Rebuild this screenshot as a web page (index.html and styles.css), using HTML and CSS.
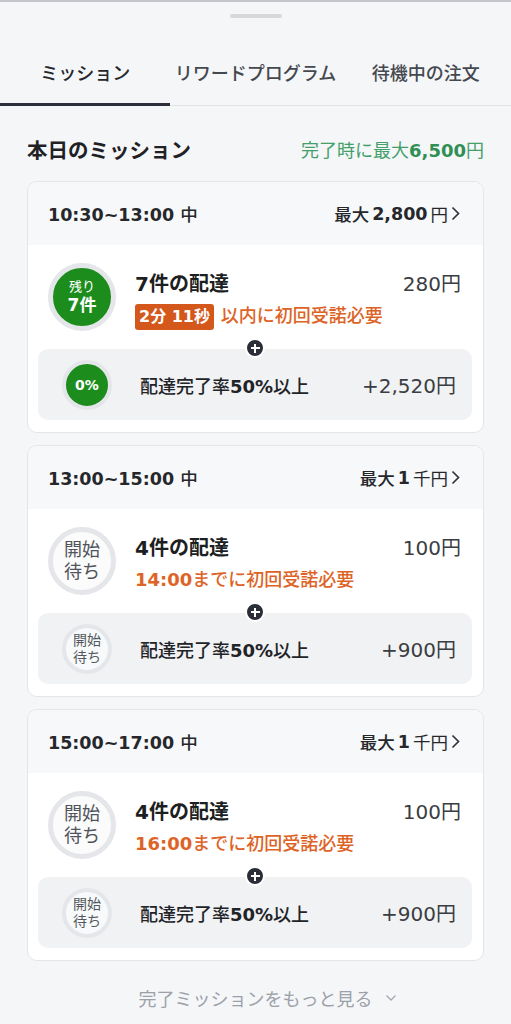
FILE: index.html
```html
<!DOCTYPE html>
<html lang="ja">
<head>
  <meta charset="UTF-8" />
  <meta name="viewport" content="width=device-width, initial-scale=1.0"/>
  <title>ミッション</title>
  <link rel="stylesheet" href="styles.css">
</head>
<body>

<div class="handle"></div>

<div class="tabs">
  <div class="tab actif">ミッション</div>
  <div class="tab">リワードプログラム</div>
  <div class="tab">待機中の注文</div>
</div>

<div class="titre">
  <h1>本日のミッション</h1>
  <div class="total">完了時に最大<b>6,500</b>円</div>
</div>

<div class="carte">
  <div class="entete">
    <span class="horaire">10:30~13:00 <span class="moyen">中</span></span>
    <span class="max"><span class="moyen">最大</span><b>2,800</b>円 <svg width="9" height="15" viewBox="0 0 9 15"><polyline points="1.5,1.5 7.5,7.5 1.5,13.5" fill="none" stroke="#30343a" stroke-width="1.7"/></svg></span>
  </div>
  <div class="ligne">
    <div class="rond vert"><small>残り</small><b>7件</b></div>
    <div class="infos">
      <div class="nom">7件の配達</div>
      <div class="delai"><span class="badge">2分 11秒</span> 以内に初回受諾必要</div>
    </div>
    <div class="prix">280円</div>
  </div>
  <div class="bonus">
    <span class="plus"></span>
    <div class="petit vert">0%</div>
    <div class="condition">配達完了率<b>50%</b>以上</div>
    <div class="gain">+2,520円</div>
  </div>
</div>

<div class="carte">
  <div class="entete">
    <span class="horaire">13:00~15:00 <span class="moyen">中</span></span>
    <span class="max"><span class="moyen">最大</span><b>1</b>千円 <svg width="9" height="15" viewBox="0 0 9 15"><polyline points="1.5,1.5 7.5,7.5 1.5,13.5" fill="none" stroke="#30343a" stroke-width="1.7"/></svg></span>
  </div>
  <div class="ligne">
    <div class="rond gris"><span>開始</span><span>待ち</span></div>
    <div class="infos">
      <div class="nom">4件の配達</div>
      <div class="delai"><b>14:00</b>までに初回受諾必要</div>
    </div>
    <div class="prix">100円</div>
  </div>
  <div class="bonus">
    <span class="plus"></span>
    <div class="petit gris"><span>開始</span><span>待ち</span></div>
    <div class="condition">配達完了率<b>50%</b>以上</div>
    <div class="gain">+900円</div>
  </div>
</div>

<div class="carte">
  <div class="entete">
    <span class="horaire">15:00~17:00 <span class="moyen">中</span></span>
    <span class="max"><span class="moyen">最大</span><b>1</b>千円 <svg width="9" height="15" viewBox="0 0 9 15"><polyline points="1.5,1.5 7.5,7.5 1.5,13.5" fill="none" stroke="#30343a" stroke-width="1.7"/></svg></span>
  </div>
  <div class="ligne">
    <div class="rond gris"><span>開始</span><span>待ち</span></div>
    <div class="infos">
      <div class="nom">4件の配達</div>
      <div class="delai"><b>16:00</b>までに初回受諾必要</div>
    </div>
    <div class="prix">100円</div>
  </div>
  <div class="bonus">
    <span class="plus"></span>
    <div class="petit gris"><span>開始</span><span>待ち</span></div>
    <div class="condition">配達完了率<b>50%</b>以上</div>
    <div class="gain">+900円</div>
  </div>
</div>

<div class="plus-missions">完了ミッションをもっと見る <svg width="12" height="8" viewBox="0 0 12 8"><polyline points="1.5,1.5 6,6 10.5,1.5" fill="none" stroke="#a3a8b0" stroke-width="1.3"/></svg></div>

</body>
</html>
```

FILE: styles.css
```css
body {
  margin: 0;
  background: #f5f6f8;
  font-family: "DejaVu Sans", "Noto Sans CJK JP", sans-serif;
  color: #222428;
  border-top: 2px solid #c3c6ca;
}
.handle {
  width: 52px;
  height: 4px;
  border-radius: 2px;
  background: #d6d8dc;
  margin: 12px auto 0;
}
.tabs {
  display: flex;
  border-bottom: 1px solid #e2e4e8;
}
.tab {
  flex: 1;
  text-align: center;
  font-size: 18px;
  font-weight: 500;
  line-height: 24px;
  color: #44484f;
  padding: 44px 0 17px;
  border-bottom: 3px solid transparent;
  margin-bottom: -1px;
}
.tab.actif {
  color: #25282d;
  border-bottom-color: #2a2f3a;
}
.titre {
  display: flex;
  justify-content: space-between;
  align-items: center;
  margin: 29px 27px 18px;
  height: 28px;
}
.titre h1 {
  margin: 0;
  font-size: 20.5px;
  font-weight: 700;
  color: #1f2125;
}
.total {
  font-size: 18px;
  color: #44a06a;
}
.total b {
  font-weight: 700;
  color: #2f8f55;
}
.carte {
  margin: 0 27px 12px;
  background: #fff;
  border: 1px solid #e3e5e9;
  border-radius: 10px;
  overflow: hidden;
}
.entete {
  height: 63px;
  background: #f7f8fa;
  display: flex;
  justify-content: space-between;
  align-items: center;
  padding: 0 23px 0 20px;
}
.horaire {
  font-size: 17.5px;
  font-weight: 700;
  color: #25272b;
}
.moyen {
  font-weight: 500;
}
.max {
  font-size: 17.5px;
  color: #25272b;
  display: flex;
  align-items: center;
  gap: 3px;
}
.max b {
  font-weight: 700;
}
.ligne {
  display: flex;
  align-items: flex-start;
  padding: 18px 22px 0 20px;
  height: 68px;
  margin-bottom: 18px;
}
.rond {
  width: 58px;
  height: 58px;
  border: 5px solid #e4e6ea;
  border-radius: 50%;
  display: flex;
  flex-direction: column;
  align-items: center;
  justify-content: center;
  text-align: center;
  flex-shrink: 0;
}
.rond.vert {
  background: #1c8d1c;
  color: #fff;
}
.rond.vert small {
  font-size: 13px;
  line-height: 17px;
}
.rond.vert b {
  font-size: 17px;
  line-height: 21px;
  font-weight: 700;
}
.rond.gris {
  background: #fbfbfc;
  color: #50545b;
  font-size: 18px;
  line-height: 22px;
}
.infos {
  flex: 1;
  margin: 8px 0 0 19px;
}
.nom {
  font-size: 20px;
  font-weight: 700;
  line-height: 26px;
  color: #1d1f22;
}
.delai {
  font-size: 18px;
  line-height: 26px;
  margin-top: 6px;
  color: #dd6426;
  font-weight: 500;
  white-space: nowrap;
}
.delai b {
  font-weight: 700;
}
.badge {
  display: inline-block;
  background: #d4571c;
  color: #fff;
  font-weight: 700;
  font-size: 16px;
  padding: 0 4px;
  border-radius: 3px;
  margin-right: 1px;
}
.prix {
  font-size: 20px;
  line-height: 26px;
  margin-top: 8px;
  color: #3a3d42;
}
.bonus {
  position: relative;
  display: flex;
  align-items: center;
  height: 71px;
  margin: 0 11px 12px 10px;
  background: #f1f2f4;
  border-radius: 10px;
  padding: 0 16px 0 24px;
}
.plus {
  position: absolute;
  top: -11px;
  left: 50%;
  margin-left: -10px;
  width: 16px;
  height: 16px;
  border: 2px solid #fff;
  border-radius: 50%;
  background: #2a2f37;
}
.plus::before,
.plus::after {
  content: "";
  position: absolute;
  background: #fff;
  left: 3.5px;
  top: 7px;
  width: 9px;
  height: 2px;
}
.plus::after {
  left: 7px;
  top: 3.5px;
  width: 2px;
  height: 9px;
}
.petit {
  width: 42px;
  height: 42px;
  border: 4px solid #e4e6ea;
  border-radius: 50%;
  display: flex;
  flex-direction: column;
  align-items: center;
  justify-content: center;
  text-align: center;
  flex-shrink: 0;
}
.petit.vert {
  background: #1c8d1c;
  color: #fff;
  font-size: 14px;
  font-weight: 700;
}
.petit.gris {
  background: #f8f9fa;
  color: #55595f;
  font-size: 14px;
  line-height: 17px;
}
.condition {
  flex: 1;
  margin-left: 28px;
  font-size: 18px;
  font-weight: 500;
  color: #222428;
}
.condition b {
  font-weight: 700;
}
.gain {
  font-size: 20px;
  color: #3a3d42;
}
.plus-missions {
  font-size: 18px;
  color: #9ca1a9;
  margin-top: 24px;
  padding-left: 24px;
  display: flex;
  justify-content: center;
  align-items: center;
  gap: 12px;
}
```
